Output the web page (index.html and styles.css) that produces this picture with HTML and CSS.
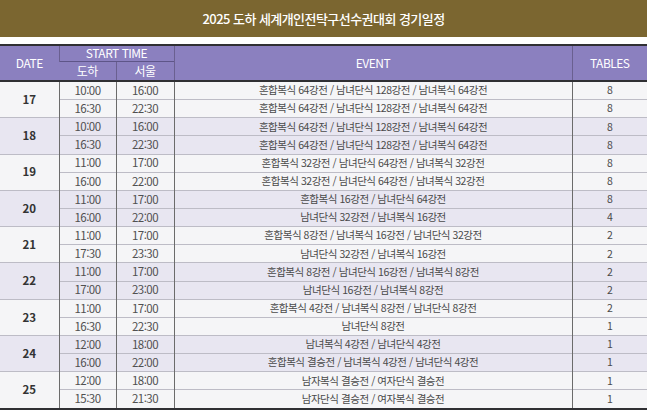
FILE: index.html
```html
<!DOCTYPE html>
<html lang="ko">
<head>
<meta charset="utf-8">
<link rel="stylesheet" href="styles.css">
</head>
<body>
<div class="title">2025 도하 세계개인전탁구선수권대회 경기일정</div>
<div class="gap"></div>
<table class="sched">
  <colgroup>
    <col class="c-date"><col class="c-t"><col class="c-t2"><col class="c-ev"><col class="c-tb">
  </colgroup>
  <thead>
    <tr class="h1"><th rowspan="2">DATE</th><th colspan="2">START TIME</th><th rowspan="2">EVENT</th><th rowspan="2">TABLES</th></tr>
    <tr class="h2"><th>도하</th><th>서울</th></tr>
  </thead>
  <tbody class="odd">
    <tr><td rowspan="2" class="d">17</td><td>10:00</td><td>16:00</td><td>혼합복식 64강전 / 남녀단식 128강전 / 남녀복식 64강전</td><td>8</td></tr>
    <tr><td>16:30</td><td>22:30</td><td>혼합복식 64강전 / 남녀단식 128강전 / 남녀복식 64강전</td><td>8</td></tr>
  </tbody>
  <tbody class="even">
    <tr><td rowspan="2" class="d">18</td><td>10:00</td><td>16:00</td><td>혼합복식 64강전 / 남녀단식 128강전 / 남녀복식 64강전</td><td>8</td></tr>
    <tr><td>16:30</td><td>22:30</td><td>혼합복식 64강전 / 남녀단식 128강전 / 남녀복식 64강전</td><td>8</td></tr>
  </tbody>
  <tbody class="odd">
    <tr><td rowspan="2" class="d">19</td><td>11:00</td><td>17:00</td><td>혼합복식 32강전 / 남녀단식 64강전 / 남녀복식 32강전</td><td>8</td></tr>
    <tr><td>16:00</td><td>22:00</td><td>혼합복식 32강전 / 남녀단식 64강전 / 남녀복식 32강전</td><td>8</td></tr>
  </tbody>
  <tbody class="even">
    <tr><td rowspan="2" class="d">20</td><td>11:00</td><td>17:00</td><td>혼합복식 16강전 / 남녀단식 64강전</td><td>8</td></tr>
    <tr><td>16:00</td><td>22:00</td><td>남녀단식 32강전 / 남녀복식 16강전</td><td>4</td></tr>
  </tbody>
  <tbody class="odd">
    <tr><td rowspan="2" class="d">21</td><td>11:00</td><td>17:00</td><td>혼합복식 8강전 / 남녀복식 16강전 / 남녀단식 32강전</td><td>2</td></tr>
    <tr><td>17:30</td><td>23:30</td><td>남녀단식 32강전 / 남녀복식 16강전</td><td>2</td></tr>
  </tbody>
  <tbody class="even">
    <tr><td rowspan="2" class="d">22</td><td>11:00</td><td>17:00</td><td>혼합복식 8강전 / 남녀단식 16강전 / 남녀복식 8강전</td><td>2</td></tr>
    <tr><td>17:00</td><td>23:00</td><td>남녀단식 16강전 / 남녀복식 8강전</td><td>2</td></tr>
  </tbody>
  <tbody class="odd">
    <tr><td rowspan="2" class="d">23</td><td>11:00</td><td>17:00</td><td>혼합복식 4강전 / 남녀복식 8강전 / 남녀단식 8강전</td><td>2</td></tr>
    <tr><td>16:30</td><td>22:30</td><td>남녀단식 8강전</td><td>1</td></tr>
  </tbody>
  <tbody class="even">
    <tr><td rowspan="2" class="d">24</td><td>12:00</td><td>18:00</td><td>남녀복식 4강전 / 남녀단식 4강전</td><td>1</td></tr>
    <tr><td>16:00</td><td>22:00</td><td>혼합복식 결승전 / 남녀복식 4강전 / 남녀단식 4강전</td><td>1</td></tr>
  </tbody>
  <tbody class="odd last">
    <tr><td rowspan="2" class="d">25</td><td>12:00</td><td>18:00</td><td>남자복식 결승전 / 여자단식 결승전</td><td>1</td></tr>
    <tr><td>15:30</td><td>21:30</td><td>남자단식 결승전 / 여자복식 결승전</td><td>1</td></tr>
  </tbody>
</table>
</body>
</html>
```

FILE: styles.css
```css
html, body {
  margin: 0;
  padding: 0;
  background: #ffffff;
}
body {
  width: 647px;
  height: 410px;
  overflow: hidden;
  font-family: "Noto Sans CJK KR", "Noto Sans", sans-serif;
}
.title {
  height: 37px;
  background: #7b6630;
  color: #ffffff;
  font-size: 13px;
  font-weight: 500;
  letter-spacing: -0.55px;
  display: flex;
  align-items: center;
  justify-content: center;
}
.gap {
  height: 7px;
}
.sched {
  width: 647px;
  border-collapse: collapse;
  table-layout: fixed;
  border-top: 2px solid #2f2f33;
}
.c-date { width: 59px; }
.c-t { width: 57px; }
.c-t2 { width: 58px; }
.c-ev { width: 398px; }
.c-tb { width: 75px; }
.sched th {
  background: #8b80bf;
  color: #ffffff;
  font-weight: 400;
  font-size: 12px;
  letter-spacing: -0.5px;
  padding: 0;
  border-left: 1px solid #6a6090;
  line-height: 1;
}
.sched th:first-child { border-left: none; }
.sched tr.h1 { height: 16px; }
.sched tr.h2 { height: 20px; }
.sched tr.h2 th { border-top: 1px solid #5e5588; }
.sched thead { border-bottom: 2px solid #2f2f33; }
.sched td {
  padding: 0;
  height: 17.15px;
  text-align: center;
  font-size: 10.5px;
  letter-spacing: -0.45px;
  color: #4a4a4a;
  border-left: 1px solid #6b6b6b;
  border-top: 1px solid #bdbcc6;
  line-height: 1;
}
.sched td:nth-last-child(4),
.sched td:nth-last-child(3) {
  font-size: 11.5px;
  letter-spacing: -0.5px;
  color: #505050;
}
.sched td.d {
  border-left: none;
  font-size: 11.5px;
  font-weight: 700;
  color: #333333;
  letter-spacing: 0;
}
.sched tbody { border-top: 1px solid #6e6e78; }
.sched tbody.odd td { background: #f5f5f7; }
.sched tbody.even td { background: #e8e6f1; }
.sched tbody.last { border-bottom: 3px solid #2f2f33; }
```
